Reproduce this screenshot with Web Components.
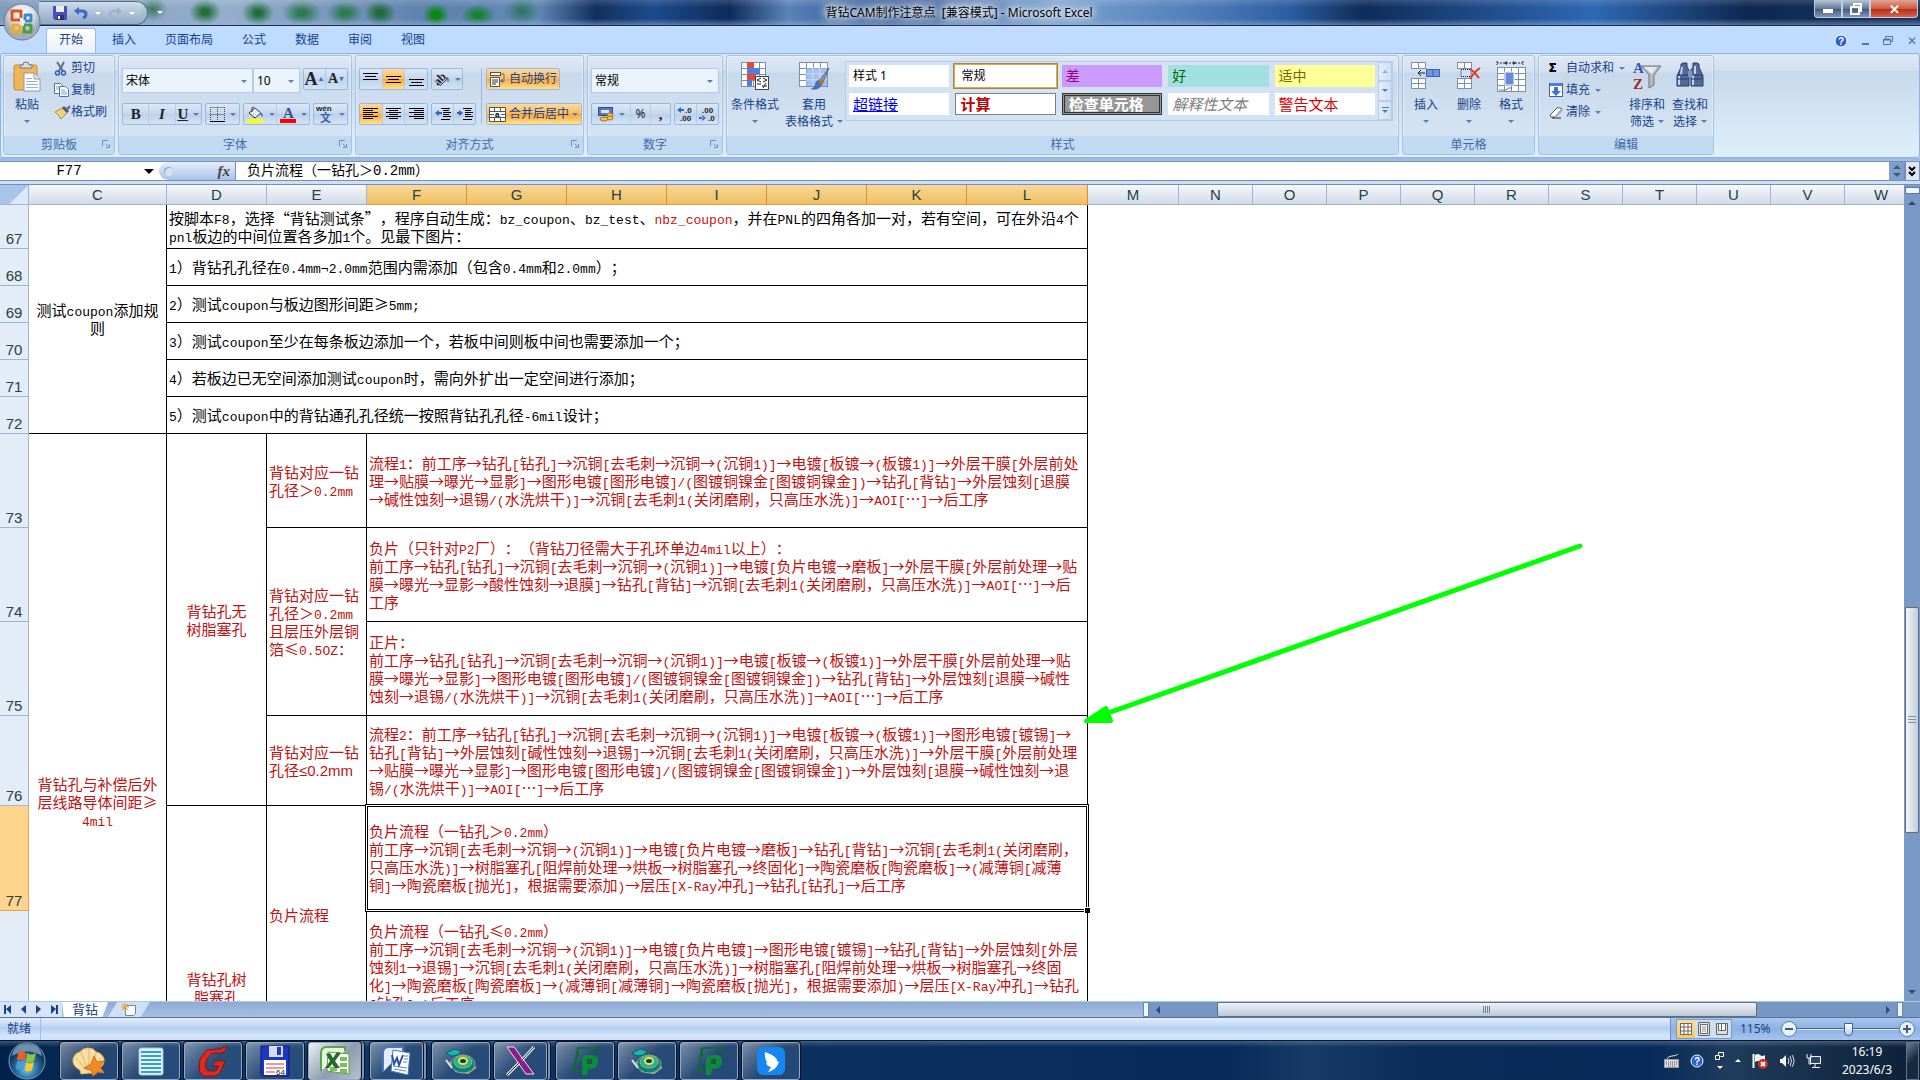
<!DOCTYPE html>
<html lang="zh-CN">
<head>
<meta charset="utf-8">
<title>背钻CAM制作注意点 [兼容模式] - Microsoft Excel</title>
<style>
  html, body { margin: 0; height: 100%; overflow: hidden; }
  body { font: 12px/16px "Noto Sans", "Noto Sans CJK SC", sans-serif; color: #15428b; text-spacing-trim: space-all; }
</style>
</head>
<body>
<excel-app></excel-app>

<script>
/* shared bits used by most of the elements */
const base = `
  * { box-sizing: border-box; }
  button, input, select { font: inherit; color: inherit; margin: 0; padding: 0; border: 0; background: none; border-radius: 0; outline: 0; }
  button { display: flex; align-items: center; justify-content: center; white-space: nowrap; }
  .dn { flex: none; display: inline-block; border: 3px solid transparent; border-top-color: #567db0; border-bottom: 0; }
`;

function define(tag, css, markup, setup) {
  const template = document.createElement("template");
  template.innerHTML = `<style>${base}${css}</style>${markup}`;
  class Component extends HTMLElement {
    constructor() {
      super();
      this.dom = this.attachShadow({ mode: "open" });
      this.dom.appendChild(document.importNode(template.content, true));
    }
    connectedCallback() {
      if (setup) setup.call(this, this.dom);
    }
  }
  window.customElements.define(tag, Component);
}

/* icons: name -> [width, height, svg content] */
const line = (x1, y1, x2, y2, c = "#111", w = 1) =>
  `<path d="M${x1} ${y1}L${x2} ${y2}" stroke="${c}" stroke-width="${w}" fill="none"/>`;
const bars = rows => rows.map(([x, y, w]) => `<rect x="${x}" y="${y}" width="${w}" height="1" fill="#000"/>`).join("");
const sheet = (x, y, c, r, w, h) => {
  let s = "";
  for (let i = 0; i < c; i++) for (let j = 0; j < r; j++)
    s += `<rect x="${x + i * w + 0.5}" y="${y + j * h + 0.5}" width="${w}" height="${h}" fill="#fff" stroke="#7d8fae"/>`;
  return s;
};
const logoP = `<path d="M9 3h17q4 0 4 4M9 3L5 26h6M9 3v8" fill="none" stroke="#0f6a34" stroke-width="2"/><path d="M13 30V15q0-5 5-5h5q6 0 6 6 0 8-8 8h-2l-1 6z" fill="#0e8a3c"/><path d="M18 14h5v5h-5z" fill="#1c5a3c"/>`;
const disc = `<path d="M6 16l6 9 12 2 8-6" fill="none" stroke="#b9b05a" stroke-width="2"/><ellipse cx="19" cy="18" rx="12" ry="9" fill="#0c7f7c" stroke="#7fa8a8"/><ellipse cx="19" cy="16" rx="9" ry="6" fill="#18b4a4" stroke="#c9b13c"/><ellipse cx="19" cy="15" rx="4" ry="3" fill="#053f4a" stroke="#f2e04a" stroke-width="2"/><path d="M2 7l8-4 7 2-3 4-7 1z" fill="#15b8b0" stroke="#0a5f63"/><path d="M2 14l6 8" stroke="#dfe6ea" stroke-width="2"/>`;

const icons = {
  office: [38, 38, `<defs><radialGradient id="o" cx=".5" cy=".3"><stop offset="0" stop-color="#fff"/><stop offset=".6" stop-color="#dfe5ec"/><stop offset="1" stop-color="#a3adba"/></radialGradient></defs>
    <circle cx="19" cy="19" r="18" fill="url(#o)" stroke="#6d7b8f"/><g fill="none" stroke-width="3" stroke-linejoin="round">
    <path d="M17 17h-8v-9h9v7" stroke="#e1501e"/><path d="M22 17v-5h6v6h-6" stroke="#3c86d2"/><path d="M16 22h-6v7h7v-7" stroke="#f3a91b"/><path d="M21 22h7v7h-7v-6" stroke="#4c9e3d"/></g>`],
  save: [14, 14, `<path d="M0 0h14v14H2l-2-2z" fill="#4a4fb0"/><path d="M3 0h8v6H3z" fill="#e9eef8"/><path d="M4 9h7v5H4z" fill="#2b2f7b"/><path d="M5 10h2v3H5z" fill="#fff"/>`],
  undo: [14, 14, `<path d="M4 5h4q4 0 4 3t-3 4" fill="none" stroke="#3868c8" stroke-width="3"/><path d="M0 5l5-4v8z" fill="#3868c8"/>`],
  redo: [14, 14, `<path d="M10 5H6Q2 5 2 8t3 4" fill="none" stroke="#9fb1c8" stroke-width="2"/><path d="M14 5L9 1v8z" fill="#9fb1c8"/>`],
  paste: [28, 31, `<rect x="1" y="4" width="23" height="25" rx="2" fill="#eeb559" stroke="#c58a30"/><path d="M7 7V4h3q0-3 3-3t3 3h3v3z" fill="#d9dde3" stroke="#6d7683"/><path d="M11 12h10l6 6v12H11z" fill="#fff" stroke="#8798b4"/><path d="M21 12v6h6" fill="#dce6f4" stroke="#8798b4"/>${[17, 20, 23, 26].map(y => line(13, y + 0.5, y < 18 ? 19 : 25, y + 0.5, "#9db0d0")).join("")}`],
  cut: [14, 15, `<path d="M3 1l6 9M10 1L5 10" stroke="#5a6f94" stroke-width="2"/><circle cx="3.500" cy="12" r="2" fill="none" stroke="#2f5cb5" stroke-width="1.500"/><circle cx="9.500" cy="12" r="2" fill="none" stroke="#2f5cb5" stroke-width="1.500"/>`],
  copy: [15, 14, `<path d="M.5.5h6l3 3v7h-9z" fill="#fff" stroke="#4d72b5"/><path d="M5.500 3.500h6l3 3v7h-9z" fill="#fff" stroke="#4d72b5"/><path d="M7 7h4M7 9h6M7 11h6M2 4h3M2 6h3" stroke="#7fa1da"/>`],
  brush: [16, 15, `<path d="M1 7l7-4 5 5-6 6q-1-3-6-7z" fill="#f0d27a" stroke="#a68a45"/><path d="M8 3l5 5 2-2-5-5z" fill="#505c70"/><path d="M12 3l4-3v3l-2 2z" fill="#7a5ab0"/>`],
  border: [15, 15, `<path d="M.5.5h14M.5 7.500h14M.5 0v14M7.500 0v14M14.500 0v14" stroke="#444" stroke-dasharray="1 1"/><path d="M0 14.500h15" stroke="#000"/>`],
  fill: [18, 17, `<path d="M3 7l6-5 6 5-6 5z" fill="#e5edf8" stroke="#333"/><path d="M6 6V2q0-1 2-1" fill="none" stroke="#333"/><path d="M14 6q3 1 3 5-3-1-3-5z" fill="#3e72cf"/><rect x="1" y="13" width="16" height="4" fill="#ff0"/>`],
  fontColor: [16, 17, `<text x="3" y="12" font-family="Liberation Serif" font-weight="bold" font-size="15" fill="#30549c">A</text><rect y="13" width="16" height="4" fill="#f00"/>`],
  wen: [18, 19, `<text x="0" y="6" font-family="Liberation Sans" font-weight="bold" font-size="8" fill="#222">wén</text><text x="4" y="17" font-family="Noto Sans CJK SC" font-weight="bold" font-size="11" fill="#3a62b8">文</text>`],
  top: [15, 16, bars([[0, 2, 15], [2, 5, 11], [0, 8, 15]])],
  middle: [15, 16, bars([[0, 5, 15], [2, 8, 11], [0, 11, 15]])],
  bottom: [15, 16, bars([[0, 8, 15], [2, 11, 11], [0, 14, 15]])],
  left: [15, 16, bars([[0, 2, 15], [0, 4, 10], [0, 6, 15], [0, 8, 10], [0, 10, 15], [0, 12, 10]])],
  center: [15, 16, bars([[0, 2, 15], [3, 4, 9], [0, 6, 15], [3, 8, 9], [0, 10, 15], [3, 12, 9]])],
  right: [15, 16, bars([[0, 2, 15], [5, 4, 10], [0, 6, 15], [5, 8, 10], [0, 10, 15], [5, 12, 10]])],
  outdent: [16, 16, bars([[6, 2, 9], [8, 4, 6], [8, 6, 8], [8, 8, 6], [8, 10, 8], [6, 13, 9]]) + `<path d="M0 7l4-3v6z" fill="#2f62c4"/><path d="M3 7h4" stroke="#2f62c4" stroke-width="2"/>`],
  indent: [16, 16, bars([[6, 2, 9], [8, 4, 6], [8, 6, 8], [8, 8, 6], [8, 10, 8], [6, 13, 9]]) + `<path d="M6 7L2 4v6z" fill="#2f62c4"/><path d="M0 7h4" stroke="#2f62c4" stroke-width="2"/>`],
  orient: [17, 17, `<text x="1" y="12" transform="rotate(-45 7 9)" font-family="Liberation Serif" font-weight="bold" font-size="12" fill="#222">ab</text><path d="M7 15l8-8m0 4V7h-4" fill="none" stroke="#444"/>`],
  wrap: [17, 17, `<rect x="1.500" y="1.500" width="10" height="3" fill="#fff" stroke="#555"/><path d="M1.500 6.500h9v9h-9z" fill="#fff" stroke="#555"/><path d="M3 9h6M3 11h6M3 13h4" stroke="#333"/><path d="M12 3h3v7h-2" fill="none" stroke="#3e72cf"/><path d="M11 10l3-2v4z" fill="#3e72cf"/>`],
  merge: [17, 15, `<path d="M.5.5h16v14H.5zM.5 4.500h16M.5 10.500h16M5.500.5v4M11.500.5v4M5.500 10.500v4M11.500 10.500v4" fill="#fff" stroke="#555"/><text x="6" y="10" font-family="Liberation Sans" font-weight="bold" font-size="8" fill="#000">a</text><path d="M1 7.500h4M12 7.500h4" stroke="#2f62c4"/>`],
  money: [16, 17, `<rect x=".5" y="1.500" width="14" height="8" fill="#5579c4" stroke="#2c4a8c"/><rect x="3" y="4" width="8" height="3" fill="#dfe8f8"/><ellipse cx="12" cy="9" rx="3" ry="2" fill="#f6c34b" stroke="#a3721c"/><ellipse cx="12" cy="12" rx="3" ry="2" fill="#f6c34b" stroke="#a3721c"/><ellipse cx="6" cy="13" rx="4" ry="2" fill="#f6c34b" stroke="#a3721c"/>`],
  decInc: [17, 16, `<path d="M0 4l4-3v6zM3 3h4v2H3z" fill="#3068cf"/><text font-family="Liberation Sans" font-weight="bold" font-size="8" fill="#222"><tspan x="8" y="7">.0</tspan><tspan x="3" y="15">.00</tspan></text>`],
  decDec: [17, 16, `<path d="M7 12L3 9v6zM0 11h4v2H0z" fill="#3068cf"/><text font-family="Liberation Sans" font-weight="bold" font-size="8" fill="#222"><tspan x="3" y="7">.00</tspan><tspan x="9" y="15">.0</tspan></text>`],
  cond: [32, 30, `${sheet(2, 1, 4, 4, 6, 6)}<rect x="8" y="1" width="7" height="6" fill="#e04a3a"/><rect x="8" y="7" width="13" height="6" fill="#4f7fd8"/><rect x="8" y="13" width="9" height="6" fill="#e04a3a"/><rect x="8" y="19" width="5" height="6" fill="#4f7fd8"/><rect x="16.500" y="15.500" width="13" height="13" fill="#fff" stroke="#444"/><path d="M22 17l-4 2 4 2M18 23h4M24 17l4 2-4 2M23 25h5M27 22l-3 5" fill="none" stroke="#222"/>`],
  tableFmt: [32, 30, `${sheet(1, 1, 4, 4, 7, 6)}<path d="M8 7h21v18H8z" fill="#8bb2ee" opacity=".8"/><path d="M15 7v18M22 7v18M8 13h21M8 19h21" stroke="#d8e6fa"/><path d="M31 7l-9 12 3 2z" fill="#8e99a8" stroke="#5d6774"/><path d="M22 18q-5 2-5 6-1 3-5 4 9 3 13-6z" fill="#3f71c0"/><path d="M22 18l4 3-2 3-4-3z" fill="#b6752c"/>`],
  insert: [32, 30, `${sheet(1, 1, 2, 1, 7, 6)}${sheet(1, 17, 2, 2, 7, 5)}<rect x="16.500" y="8.500" width="13" height="7" fill="#6d97e6" stroke="#3c62ad"/><path d="M23 9v6" stroke="#3c62ad"/><path d="M15 12H8m3-3l-3 3 3 3" fill="none" stroke="#222"/>`],
  remove: [28, 30, `${sheet(2, 1, 2, 1, 7, 6)}${sheet(2, 17, 2, 2, 7, 5)}<path d="M6 8.500h10v7H6z" fill="#cfe0fa" stroke="#222" stroke-dasharray="1 1"/><path d="M15 8q5 3 9 9M25 7q-6 4-10 11" fill="none" stroke="#e03a22" stroke-width="2"/>`],
  format: [32, 31, `<path d="M2 2h26M2 0v4M28 0v4" stroke="#333" stroke-dasharray="2 1"/><path d="M9 2l3-2v4zM21 2l-3-2v4z" fill="#333"/>${sheet(2, 6, 4, 4, 7, 6)}<rect x="10" y="11" width="9" height="13" fill="#5e8be0" stroke="#fff"/><path d="M4 29h7l2-2h4" stroke="#777" fill="none"/>`],
  fillDown: [14, 16, `<rect x=".5" y="1.500" width="13" height="13" fill="#fff" stroke="#3c62ad"/><rect x="1" y="1" width="12" height="3" fill="#4f7fd8"/><path d="M5 5h4v4h3l-5 5-5-5h3z" fill="#3e72e0"/>`],
  eraser: [14, 13, `<path d="M1 9l7-7q3-1 5 1L6 11H2z" fill="#fff" stroke="#555"/><path d="M3 12h9" stroke="#222"/><path d="M6 11l7-8v3l-6 6z" fill="#aab4c2"/>`],
  sort: [30, 30, `<text x="1" y="12" font-family="Liberation Serif" font-weight="bold" font-size="15" fill="#3458a8">A</text><text x="1" y="28" font-family="Liberation Serif" font-weight="bold" font-size="15" fill="#9c2a22">Z</text><path d="M9 5h20l-7 9v10l-5 3V14z" fill="#b5bac1" stroke="#6f757d"/><path d="M12 6h13l-5 7z" fill="#e6e9ed"/>`],
  find: [30, 28, `<path d="M8 2h4v4l2 3v16H2V15l4-9V3zM22 2h-4v4l-2 3v16h12V15l-4-9V3z" fill="#516a9e" stroke="#2b3d66"/><path d="M4 15v9M7 6l-1 8M18 14v10M20 5v8" stroke="#c5d3ee" stroke-width="2"/><path d="M2 18h12M16 18h12M2 14h12M16 14h12" stroke="#28375d"/><rect x="13" y="10" width="4" height="6" fill="#7f93bb"/>`],
  launch: [8, 8, `<path d="M.5 6V.5H6M3.500 3.500l3 3M7.500 4v3.500H4" fill="none" stroke="#6a8ebf"/>`],
  help: [14, 14, `<circle cx="7" cy="7" r="6" fill="#2a62d0" stroke="#fff"/><text x="4" y="11" font-family="Liberation Sans" font-weight="bold" font-size="10" fill="#fff">?</text>`],
  restore: [10, 9, `<path d="M2.500 2.500v-2h7v5h-2M.5 3.500h7v5h-7z" fill="none" stroke="#5a6f91"/><path d="M1 3.500h6" stroke="#5a6f91" stroke-width="2"/>`],
  winRestore: [12, 12, `<path d="M4 3V1h7v7H9M1 4h8v7H1z" fill="none" stroke="#fff" stroke-width="2"/>`],
  newSheet: [17, 13, `<path d="M4.500 2.500h10v8l-2 2h-8z" fill="#fff" stroke="#6f86ab"/><path d="M4 0v8M0 4h8M1 1l6 6M7 1L1 7" stroke="#e69a2c"/>`],
  normalView: [14, 14, `<path d="M1.500 1.500h11v11h-11zM5 1v12M9 1v12M1 5h12M1 9h12" fill="#fff" stroke="#6b655a"/>`],
  pageView: [14, 14, `<path d="M1.500.5h11v13h-11z" fill="#ddd" stroke="#666"/><path d="M3.500 2.500h7v9h-7z" fill="#fff" stroke="#666"/><path d="M5 5h4M5 7h4M5 9h4" stroke="#888"/>`],
  breakView: [14, 14, `<path d="M1.500 1.500h11v11h-11z" fill="#ddd" stroke="#666"/><path d="M3.500 1.500h3v7h-3zM6.500 1.500h4v7h-4z" fill="#fff" stroke="#666"/>`],
  start: [38, 38, `<defs><radialGradient id="s" cx=".5" cy=".7"><stop offset="0" stop-color="#7fd0ee"/><stop offset=".6" stop-color="#2a6d9e"/><stop offset="1" stop-color="#123a5e"/></radialGradient></defs><circle cx="19" cy="19" r="18" fill="url(#s)" stroke="#6fa4c4"/><path d="M4 14q15-9 30 0-2-12-15-12T4 14z" fill="#cfe4f0" opacity=".5"/>
    <path d="M10 11q4-3 8 0l-1 8q-4-3-8 0z" fill="#e8602a"/><path d="M19 11q4 3 9 0l-2 8q-4 3-8 0z" fill="#8cc63f"/><path d="M9 20q4-3 8 0l-1 8q-4-3-8 0z" fill="#3f9fe0"/><path d="M18 20q4 3 8 0l-2 8q-4 3-7 0z" fill="#ffc72e"/>`],
  shell: [34, 30, `<path d="M17 27l-8 1-1-4Q0 20 1 13 3 7 8 6q3-4 8-4 6 0 8 4 6 1 8 7 1 7-7 11l-1 4z" fill="#f9e0a2" stroke="#e2b25c"/><path d="M15 25L4 12M16 25L9 6M17 25V3M18 25l6-18M19 25l10-13" stroke="#e3b564"/><path d="M22 10l3 6 7-1-4 6 4 6-7-1-4 4-2-6-7-2 7-4z" fill="#f08a24" stroke="#d0731a" stroke-linejoin="round"/>`],
  notepad: [26, 30, `<rect x="1" y="2" width="24" height="27" rx="2" fill="#dff3fb" stroke="#9fc5da"/>${[5, 9, 13, 17, 21, 25].map(y => `<rect x="3" y="${y}" width="20" height="2" fill="#3d9cc8"/>`).join("")}`],
  g: [30, 32, `<path d="M29 1q-1 6-6 7H14l-5 6-2 8 3 4h8l3-5h-6l2-5h10l-4 10-5 5H6l-5-5 1-12 7-9 13-1z" fill="#dc2c20" stroke="#8e120c"/>`],
  floppy: [30, 32, `<path d="M1 1h28v30H3l-2-2z" fill="#1d36c4" stroke="#0b1a78"/><rect x="9" y="1" width="14" height="11" fill="#d7dce6"/><rect x="17" y="2" width="4" height="8" fill="#1d36c4"/><rect x="4" y="15" width="22" height="15" fill="#fff"/><path d="M6 19h18M6 23h18M6 27h9" stroke="#d33"/><text x="16" y="30" font-family="Liberation Sans" font-size="8" fill="#222">64</text>`],
  excel: [32, 32, `<path d="M2 26V8q0-6 6-6h18v4" fill="#e6f4e0" stroke="#5aa545" stroke-width="2"/><path d="M9 7l21 2v20L8 26z" fill="#fff" stroke="#5aa545"/><path d="M21 12h7v4h-7zM21 18h7v4h-7zM21 24h7v4h-7zM11 22h7v4h-7z" fill="#7cbf5c"/><path d="M7 9l4-1 3 5 4-6 4 1-6 8 5 7h-5l-3-4-3 4H6l5-7z" fill="#276b2a"/>`],
  word: [32, 32, `<path d="M2 27V8q0-6 6-6h14v4" fill="#e3ecfa" stroke="#4a76c0" stroke-width="2"/><path d="M12 5l17 3-2 22-17-4z" fill="#fff" stroke="#4a76c0"/><path d="M23 11h4M23 14h4M22 17h4M13 21l13 2M13 24l12 2" stroke="#5b85cb"/><path d="M11 10l2 9 3-6 2 7 4-10" fill="none" stroke="#2854a4" stroke-width="2"/>`],
  disc: [34, 30, disc],
  x: [32, 30, `<path d="M2 1h7l20 27h-8z" fill="#8b1a8b" stroke="#f0e0f0"/><path d="M29 1L17 14M14 17L2 29" stroke="#f4f4f4" stroke-width="3"/><path d="M29 1L17 14M14 17L2 29" stroke="#222"/>`],
  p: [32, 32, logoP],
  wing: [30, 30, `<rect x="1" y="1" width="28" height="28" rx="6" fill="#1687f0"/><path d="M9 6q12 4 12 9l2 1q-3 8-11 10 2-3 3-5-5-1-5-5l2 1q-4-4-3-11z" fill="#fff"/>`],
  keyboard: [15, 14, `<path d="M3 5q1-3 5-3t6-2" fill="none" stroke="#ddd"/><rect x=".5" y="5.500" width="14" height="8" fill="#ddd" stroke="#999"/><path d="M2 8h11M2 10h11M4 12h7" stroke="#555" stroke-dasharray="1 1"/>`],
  mini: [9, 8, `<path d="M3.500 3v-2.500h5v4h-3M.5 3.500h4v4h-4z" fill="none" stroke="#fff"/>`],
  flag: [16, 16, `<path d="M1.500 1v14" stroke="#fff" stroke-width="2"/><path d="M3 2q3-2 5 0t5 0v7q-3 2-5 0t-5 0z" fill="#f4f4f4"/><circle cx="11" cy="11" r="5" fill="#d8281c"/><path d="M9 9l4 4M13 9l-4 4" stroke="#fff" stroke-width="2"/>`],
  sound: [16, 14, `<path d="M1 5h2l4-4v12L3 9H1z" fill="#f4f4f4"/><path d="M9 4q2 3 0 6M11 2q3 5 0 10M13 1q4 6 0 12" fill="none" stroke="#ddd"/>`],
  net: [16, 15, `<path d="M4.500 3.500h10v7h-10zM9 11v3M6 14.500h8" fill="#26476b" stroke="#f4f4f4"/><path d="M1 1v4h4V1M3 5v6h2" fill="none" stroke="#f4f4f4" stroke-width="1"/>`]
};

class AppIcon extends HTMLElement {
  connectedCallback() {
    if (this.shadowRoot || !this.hasAttribute("name")) return;
    const [w, h, body] = icons[this.getAttribute("name")];
    this.attachShadow({ mode: "open" }).innerHTML =
      `<style>:host { display: block; flex: none; } svg { display: block; }</style>
       <svg width="${w}" height="${h}" viewBox="0 0 ${w} ${h}" aria-hidden="true">${body}</svg>`;
  }
}
window.customElements.define("app-icon", AppIcon);

/* title bar */
define("title-bar", `
  :host { display: flex; height: 26px; align-items: flex-start; position: relative; z-index: 2; color: #000; border-bottom: 1px solid #1c2c44;
    background:
      linear-gradient(rgba(255,255,255,.15), transparent 30%, transparent 75%, rgba(150,180,220,.5)),
      radial-gradient(ellipse 14px 12px at 153px 9px, rgba(40,110,60,.8), transparent),
      radial-gradient(ellipse 16px 13px at 205px 12px, rgba(20,105,45,.9) 20%, transparent),
      radial-gradient(ellipse 16px 13px at 258px 13px, rgba(20,105,45,.9) 20%, transparent),
      radial-gradient(ellipse 20px 13px at 302px 13px, rgba(25,115,55,.8) 20%, transparent),
      radial-gradient(ellipse 18px 12px at 345px 13px, rgba(25,115,55,.8) 20%, transparent),
      radial-gradient(ellipse 16px 13px at 380px 13px, rgba(20,105,45,.9) 20%, transparent),
      radial-gradient(ellipse 13px 12px at 436px 15px, rgba(10,135,25,1) 30%, transparent),
      radial-gradient(ellipse 17px 11px at 478px 15px, rgba(15,130,35,.9) 20%, transparent),
      radial-gradient(ellipse 18px 14px at 522px 11px, rgba(30,110,70,.8), transparent),
      linear-gradient(90deg, #7e99ba 0, #94aecb 12%, #5f82ae 22%, #6289b6 28%, #12305f 31%, #1e4a8c 34%, #0e2b5a 38%, #5a83b8 41%, #2a5290 46%, #7ba2d2 55%, #4d7ab6 63%, #2d5fa4 67%, #0f2c5a 71%, #2f68b4 83%, #0e2850 91%, #16345f 100%);
  }
  .side { flex: 1; display: flex; align-items: center; }
  .orb { position: absolute; left: 3px; top: 3px; }
  .qat { display: flex; align-items: center; gap: 7px; height: 24px; margin: 1px 0 0 39px; padding: 0 12px 0 13px; border: 1px solid #56708f; border-left-color: transparent; border-radius: 0 12px 12px 0; background: linear-gradient(rgba(235,242,250,.7), rgba(150,172,200,.6)); }
  .qat .dn, .more { border-top-color: #fff; }
  .more { margin-left: 9px; }
  h1 { margin: 4px 0 0; font: inherit; line-height: 18px; white-space: pre; text-shadow: 0 0 5px #fff, 0 0 8px #fff, 0 0 12px #fff, 0 0 16px #fff; }
  .win { justify-content: flex-end; padding-right: 2px; }
  .win button { height: 18px; width: 28px; border: 1px solid #c3cfdf; border-top: 0; background: linear-gradient(#b9c6d6, #61779a 50%, #3f5678 51%, #7d97b8); color: #fff; }
  .win button:first-child { border-radius: 0 0 0 4px; }
  .win i { width: 10px; height: 4px; background: #fff; margin-top: 4px; }
  .win button.close { width: 48px; border-radius: 0 0 4px 0; background: linear-gradient(#e3a493, #cc5a42 50%, #b32c12 51%, #d8604a); font-weight: bold; font-size: 13px; }
`, `
  <div class="side">
    <button class="orb" aria-label="Office"><app-icon name="office"></app-icon></button>
    <div class="qat">
      <button aria-label="保存"><app-icon name="save"></app-icon></button>
      <button aria-label="撤消"><app-icon name="undo"></app-icon></button><i class="dn"></i>
      <button aria-label="恢复"><app-icon name="redo"></app-icon></button><i class="dn"></i>
    </div><i class="dn more"></i>
  </div>
  <h1>背钻CAM制作注意点  [兼容模式] - Microsoft Excel</h1>
  <div class="side win">
    <button aria-label="最小化"><i></i></button><button aria-label="还原"><app-icon name="winRestore"></app-icon></button><button class="close" aria-label="关闭">✕</button>
  </div>
`);

define("ribbon-tabs", `
  :host { display: flex; height: 27px; padding: 2px 3px 0 46px; background: #bfdbff; justify-content: space-between; }
  nav { display: flex; gap: 1px; }
  nav button { padding: 0 14px 2px; }
  nav .on { padding: 0 12px 2px; margin-right: 1px; background: linear-gradient(#fff, #e9f1fb); border: 1px solid #9cbbe0; border-bottom: 0; border-radius: 3px 3px 0 0; }
  .doc { display: flex; align-items: center; gap: 14px; color: #5a6f91; }
  .doc i { width: 7px; height: 2px; background: #5a6f91; margin-top: 6px; }
`, `
  <nav>
    <button class="on">开始</button><button>插入</button><button>页面布局</button><button>公式</button><button>数据</button><button>审阅</button><button>视图</button>
  </nav>
  <div class="doc">
    <button aria-label="帮助"><app-icon name="help"></app-icon></button>
    <button aria-label="最小化"><i></i></button>
    <button aria-label="还原"><app-icon name="restore"></app-icon></button>
    <button aria-label="关闭">✕</button>
  </div>
`);

define("ribbon-group", `
  :host { display: flex; flex-direction: column; border: 1px solid #a6c1e2; border-radius: 3px; box-shadow: inset 0 0 0 1px rgba(255,255,255,.4); overflow: hidden;
    background: linear-gradient(#dde8f5, #d3e0f0 16px, #c8d8ec 17px, #d5e4f2 80px); }
  .body { height: 80px; display: flex; }
  footer { flex: 1; display: flex; align-items: center; justify-content: center; background: #c1d9f1; color: #3e6aaa; position: relative; }
  button { position: absolute; right: 4px; top: 4px; }
  :host([plain]) button { display: none; }
`, `<div class="body"><slot></slot></div><footer><span></span><button aria-label="更多选项"><app-icon name="launch"></app-icon></button></footer>`,
function (dom) { dom.querySelector("span").textContent = this.getAttribute("label"); });

/* large button: icon, text, arrow under it or beside the second line */
define("big-button", `
  :host { display: block; }
  button { width: 100%; flex-direction: column; justify-content: flex-start; padding-top: 5px; line-height: 17px; }
  .pic { height: 35px; display: block; }
  .row { display: flex; align-items: center; gap: 4px; height: 17px; }
`, `<button><span class="pic"></span><slot></slot><span class="row"><span></span><i class="dn"></i></span></button>`,
function (dom) {
  const icon = document.createElement("app-icon");
  icon.setAttribute("name", this.getAttribute("icon"));
  dom.querySelector(".pic").appendChild(icon);
  if (this.getAttribute("second")) dom.querySelector(".row span").textContent = this.getAttribute("second");
  else dom.querySelector(".row span").remove();
});

define("small-button", `
  :host { display: block; }
  button { height: 22px; }
  .pic { width: 17px; display: flex; justify-content: flex-start; color: #000; font-weight: bold; }
  .dn { margin-left: 5px; display: none; }
  :host([drop]) .dn { display: block; }
`, `<button><span class="pic"><slot name="icon"></slot></span><slot></slot><i class="dn"></i></button>`);

/* bordered strip of tool buttons */
define("tool-set", `
  :host { display: flex; height: 22px; border: 1px solid #9ab9e0; border-radius: 2px; background: linear-gradient(#dbe7f5, #c5d7ee 50%, #bcd0ea 51%, #d4e3f4); color: #222; }
`, `<slot></slot>`);

define("style-gallery", `
  :host { display: flex; border: 1px solid #b3cdea; background: #d4e3f4; height: 60px; margin-top: 5px; }
  .items { flex: 1; display: grid; grid-template-columns: repeat(5, 1fr); grid-template-rows: 28px 28px; }
  .items button { margin: 3px; padding: 0 4px; justify-content: flex-start; background: #fff; color: #000; line-height: 18px; }
  .items button.sel { margin: 1px; padding: 0 6px; border: 2px solid #e5a93a; outline: 1px solid #a3874a; outline-offset: -1px; }
  .items .bad { background: #c9f; color: #9c0070; }
  .items .good { background: #a0e0e0; color: #006b00; }
  .items .mid { background: #ff9; color: #7a6500; }
  .items .bad, .items .good, .items .mid, .items .link, .items .calc, .items .check, .items .note, .items .warn { font-size: 14px; }
  .items .link { color: #00f; text-decoration: underline; font-size: 15px; }
  .items .calc { color: #c00000; font-weight: bold; border: 1px solid #7f7f7f; font-size: 15px; }
  .items .check { color: #fff; background: #969696; font-weight: bold; border: 3px double #333; font-size: 15px; }
  .items .note { color: #808080; font-style: italic; font-size: 15px; }
  .items .warn { color: #e00000; font-size: 15px; }
  .scroll { width: 14px; display: flex; flex-direction: column; }
  .scroll button { flex: 1; border: 1px solid #b3cdea; background: linear-gradient(90deg, #e3edf9, #cfdff2); flex-direction: column; gap: 2px; }
  .up { transform: rotate(180deg); opacity: .5; }
  b { width: 7px; height: 1px; background: #567db0; }
`, `
  <div class="items">
    <button>样式 1</button><button class="sel">常规</button><button class="bad">差</button><button class="good">好</button><button class="mid">适中</button>
    <button class="link">超链接</button><button class="calc">计算</button><button class="check">检查单元格</button><button class="note">解释性文本</button><button class="warn">警告文本</button>
  </div>
  <div class="scroll">
    <button aria-label="上一行"><i class="dn up"></i></button><button aria-label="下一行"><i class="dn"></i></button><button aria-label="其他"><b></b><i class="dn"></i></button>
  </div>
`);

define("ribbon-bar", `
  :host { display: flex; gap: 3px; height: 105px; padding: 1px 2px 2px; border: 1px solid #8db2e3; border-radius: 3px; background: linear-gradient(#dde8f5, #d3e0f0 16px, #c8d8ec 17px, #ddf0fa); }
  .col { display: flex; flex-direction: column; }
  .rows { display: flex; flex-direction: column; gap: 11px; padding: 12px 4px 0 3px; }
  .row { display: flex; gap: 3px; align-items: flex-start; height: 24px; }
  .row + .row { height: 22px; }
  .combo { position: relative; display: flex; height: 25px; border: 1px solid #b3c9e6; background: #eaf2fb; color: #000; }
  .combo select { appearance: none; width: 100%; padding-left: 3px; }
  .combo .dn { position: absolute; right: 5px; top: 11px; }
  .combo + .combo { margin-left: -3px; }
  .sep { width: 1px; align-self: stretch; background: #9ab9e0; margin: 12px 1px; }
  tool-set button { flex: 1; gap: 5px; font-size: 12px; }
  tool-set button + button { border-left: 1px solid #b5cce8; }
  tool-set .wide { flex: 2; }
  tool-set .on { background: linear-gradient(#fbd9a0, #fdbb5c 50%, #fca63c 51%, #fee18c); color: #15428b; }
  tool-set .serif { font-family: "Liberation Serif", serif; font-weight: bold; font-size: 15px; }
  tool-set .grow { font-size: 18px; gap: 0; }
  tool-set .shrink { font-size: 14px; gap: 0; }
  sup { font-size: 7px; line-height: 14px; color: #3868c8; }
  tool-set .full { justify-content: flex-start; padding-left: 2px; gap: 3px; }
  ribbon-group { flex: none; }
`, `
  <ribbon-group label="剪贴板" style="width:112px">
    <big-button icon="paste" style="width:46px">粘贴</big-button>
    <div class="col" style="padding:1px 0 0 4px">
      <small-button><app-icon slot="icon" name="cut"></app-icon>剪切</small-button>
      <small-button><app-icon slot="icon" name="copy"></app-icon>复制</small-button>
      <small-button><app-icon slot="icon" name="brush"></app-icon>格式刷</small-button>
    </div>
  </ribbon-group>

  <ribbon-group label="字体" style="width:234px">
    <div class="rows">
      <div class="row">
        <label class="combo" style="width:131px"><select aria-label="字体"><option>宋体</option></select><i class="dn"></i></label>
        <label class="combo" style="width:47px"><select aria-label="字号"><option>10</option></select><i class="dn"></i></label>
        <tool-set style="width:45px"><button class="serif grow">A<sup>▲</sup></button><button class="serif shrink">A<sup>▼</sup></button></tool-set>
      </div>
      <div class="row">
        <tool-set style="width:80px"><button class="serif">B</button><button class="serif"><i>I</i></button><button class="serif"><u>U</u><i class="dn"></i></button></tool-set>
        <tool-set style="width:35px"><button><app-icon name="border"></app-icon><i class="dn"></i></button></tool-set>
        <tool-set style="width:67px"><button><app-icon name="fill"></app-icon><i class="dn"></i></button><button><app-icon name="fontColor"></app-icon><i class="dn"></i></button></tool-set>
        <tool-set style="width:35px"><button><app-icon name="wen"></app-icon><i class="dn"></i></button></tool-set>
      </div>
    </div>
  </ribbon-group>

  <ribbon-group label="对齐方式" style="width:229px">
    <div class="rows">
      <div class="row">
        <tool-set style="width:69px"><button><app-icon name="top"></app-icon></button><button class="on"><app-icon name="middle"></app-icon></button><button><app-icon name="bottom"></app-icon></button></tool-set>
        <tool-set style="width:32px"><button><app-icon name="orient"></app-icon><i class="dn"></i></button></tool-set>
      </div>
      <div class="row">
        <tool-set style="width:69px"><button class="on"><app-icon name="left"></app-icon></button><button><app-icon name="center"></app-icon></button><button><app-icon name="right"></app-icon></button></tool-set>
        <tool-set style="width:45px"><button><app-icon name="outdent"></app-icon></button><button><app-icon name="indent"></app-icon></button></tool-set>
      </div>
    </div>
    <i class="sep"></i>
    <div class="rows" style="padding-right:0">
      <div class="row"><tool-set style="width:74px"><button class="on full"><app-icon name="wrap"></app-icon>自动换行</button></tool-set></div>
      <div class="row"><tool-set style="width:96px"><button class="on full"><app-icon name="merge"></app-icon>合并后居中<i class="dn"></i></button></tool-set></div>
    </div>
  </ribbon-group>

  <ribbon-group label="数字" style="width:136px">
    <div class="rows">
      <div class="row"><label class="combo" style="width:128px"><select aria-label="数字格式"><option>常规</option></select><i class="dn"></i></label></div>
      <div class="row">
        <tool-set style="width:80px"><button class="wide"><app-icon name="money"></app-icon><i class="dn"></i></button><button>%</button><button class="serif">,</button></tool-set>
        <tool-set style="width:45px"><button><app-icon name="decInc"></app-icon></button><button><app-icon name="decDec"></app-icon></button></tool-set>
      </div>
    </div>
  </ribbon-group>

  <ribbon-group plain label="样式" style="width:673px">
    <big-button icon="cond" style="width:56px">条件格式</big-button>
    <big-button icon="tableFmt" second="表格格式" style="width:62px">套用</big-button>
    <style-gallery style="width:548px"></style-gallery>
  </ribbon-group>

  <ribbon-group plain label="单元格" style="width:133px">
    <big-button icon="insert" style="width:46px">插入</big-button>
    <big-button icon="remove" style="width:40px">删除</big-button>
    <big-button icon="format" style="width:44px">格式</big-button>
  </ribbon-group>

  <ribbon-group plain label="编辑" style="width:176px">
    <div class="col" style="padding:1px 0 0 10px;width:86px">
      <small-button drop><b slot="icon">Σ</b>自动求和</small-button>
      <small-button drop><app-icon slot="icon" name="fillDown"></app-icon>填充</small-button>
      <small-button drop><app-icon slot="icon" name="eraser"></app-icon>清除</small-button>
    </div>
    <big-button icon="sort" second="筛选" style="width:44px">排序和</big-button>
    <big-button icon="find" second="选择" style="width:42px">查找和</big-button>
  </ribbon-group>
`);

define("formula-bar", `
  :host { display: flex; height: 26px; padding: 3px 0 3px; background: linear-gradient(#9bb9e0, #cfe0f6 80%); color: #000; }
  .box { flex: 1; display: flex; height: 20px; background: #fff; border: 1px solid #7290b8; border-left: 0; }
  input { font-family: "Liberation Mono", "Noto Sans CJK SC", monospace; font-size: 14px; min-width: 0; }
  .name { width: 138px; text-align: center; }
  .list { width: 21px; }
  .list .dn { border-width: 5px; border-bottom: 0; border-top-color: #000; }
  .fx { width: 77px; display: flex; align-items: center; justify-content: space-between; padding: 0 5px; border-radius: 9px 0 0 9px; border-right: 1px solid #7290b8; background: linear-gradient(#e6eefa, #a9c3e6); }
  .fx i { width: 9px; height: 9px; border-radius: 50%; background: #d5e2f3; box-shadow: inset 1px 1px #8ba8cf; }
  .fx em { font: italic bold 15px/16px "Liberation Serif", serif; color: #444; }
  .text { flex: 1; padding-left: 11px; }
  .spin { width: 15px; background: #7f9fca; flex-direction: column; gap: 4px; }
  .spin .dn { border-width: 4px; border-bottom: 0; border-top-color: #3b5a8c; }
  .spin .dn:first-child { transform: rotate(180deg); }
  .grow { width: 15px; background: #dbe7f6; border: 1px solid #7290b8; }
`, `
  <div class="box">
    <input class="name" value="F77" aria-label="名称框"><button class="list" aria-label="名称列表"><i class="dn"></i></button>
    <div class="fx"><i></i><em>fx</em></div>
    <input class="text" value="负片流程（一钻孔＞0.2mm）" aria-label="编辑栏">
    <button class="spin" aria-label="滚动"><i class="dn"></i><i class="dn"></i></button>
  </div>
  <button class="grow" aria-label="展开编辑栏"><svg width="9" height="11"><path d="M1 1l3 3 3-3M1 6l3 3 3-3" fill="none" stroke="#000" stroke-width="2"/></svg></button>
`);

/* worksheet */
define("work-sheet", `
  :host { flex: 1; min-height: 0; display: flex; background: #fff; border-top: 1px solid #7290b8; }
  .view { flex: 1; min-width: 0; overflow: hidden; position: relative; }
  table { table-layout: fixed; width: calc(100% + 14px); border-collapse: separate; border-spacing: 0; font: 15px/18px "Noto Sans CJK SC", sans-serif; color: #000; }
  th { font: 15px/18px "Liberation Sans", sans-serif; color: #27413e; padding: 0; }
  thead th { height: 20px; border: solid #9eb6ce; border-width: 0 1px 1px 0; background: linear-gradient(#f6f9fd, #dfe6ef 60%, #d3dbe7); }
  thead th.on { background: linear-gradient(#f8d79b, #f1c05f); border-color: #e28b27; border-bottom-color: #d3a057; }
  thead th.all { background: linear-gradient(135deg, #a9c4e9 60%, #dbe8f8 61%); }
  tbody th { background: #e4ecf7; border: solid #9eb6ce; border-width: 0 1px 1px 0; vertical-align: bottom; }
  tbody th.on { background: #ffd58d; border-color: #e9a14f; }
  td { padding: 0 2px; border: solid #000; border-width: 0 1px 1px 0; vertical-align: middle; white-space: nowrap; }
  td.c { text-align: center; }
  .red { color: #c01212; }
  td.sel { position: relative; }
  td.sel::after { content: ""; position: absolute; inset: -1px; border: 1px solid #fff; outline: 1px solid #000; box-shadow: inset 0 0 0 1px #000; }
  td.sel::before { content: ""; position: absolute; right: -3px; bottom: -3px; width: 5px; height: 5px; background: #000; border: solid #fff; border-width: 1px 0 0 1px; z-index: 1; }
  .half { font-family: "Liberation Mono", monospace; font-size: 13px; line-height: 0; }
  .arial { font-family: "Liberation Sans", sans-serif; line-height: 0; }
  .mark { position: absolute; left: 1080px; top: 355px; }
  .bar { width: 16px; background: #7b99c6; display: flex; flex-direction: column; align-items: center; }
  .split { width: 15px; height: 7px; margin-top: 2px; border: 1px solid #5d7aa8; background: #f2f6fb; }
  .bar button { width: 16px; height: 18px; }
  .bar .dn { border-width: 4px; border-bottom: 0; border-top-color: #2e4a7c; }
  .up { transform: rotate(180deg); }
  .track { flex: 1; width: 100%; display: flex; flex-direction: column; padding: 0 1px; }
  .track::before { content: ""; flex: 397; }
  .track::after { content: ""; flex: 151; }
  .thumb { flex: 225; border: 1px solid #5d7087; border-radius: 2px; background: linear-gradient(90deg, #f4f6f9, #c3ccd8); display: flex; align-items: center; justify-content: center; }
  .thumb::after { content: ""; width: 8px; height: 8px; background: repeating-linear-gradient(#7d8fa8 0 1px, transparent 1px 3px); }
`, `
  <div class="view">
    <table>
      <colgroup>
        <col style="width:29px"><col style="width:138px"><col style="width:100px" span="8"><col style="width:121px"><col style="width:91px"><col style="width:74px" span="9"><col>
      </colgroup>
      <thead><tr><th class="all"></th></tr></thead>
      <tbody>
        <tr style="height:44px"><th>67</th>
          <td class="c" rowspan="6">测试coupon添加规<br>则</td>
          <td colspan="9">按脚本F8，选择“背钻测试条”，程序自动生成：bz_coupon、bz_test、<span class="red">nbz_coupon</span>，并在PNL的四角各加一对，若有空间，可在外沿4个<br>pnl板边的中间位置各多加1个。见最下图片：</td></tr>
        <tr style="height:37px"><th>68</th><td colspan="9">1）背钻孔孔径在0.4mm¬2.0mm范围内需添加（包含0.4mm和2.0mm）；</td></tr>
        <tr style="height:37px"><th>69</th><td colspan="9">2）测试coupon与板边图形间距≥5mm;</td></tr>
        <tr style="height:37px"><th>70</th><td colspan="9">3）测试coupon至少在每条板边添加一个，若板中间则板中间也需要添加一个；</td></tr>
        <tr style="height:37px"><th>71</th><td colspan="9">4）若板边已无空间添加测试coupon时，需向外扩出一定空间进行添加；</td></tr>
        <tr style="height:37px"><th>72</th><td colspan="9">5）测试coupon中的背钻通孔孔径统一按照背钻孔孔径-6mil设计；</td></tr>
        <tr style="height:94px"><th>73</th>
          <td class="c red" rowspan="7">背钻孔与补偿后外<br>层线路导体间距≥<br>4mil</td>
          <td class="c red" rowspan="4">背钻孔无<br>树脂塞孔</td>
          <td class="red">背钻对应一钻<br>孔径＞0.2mm</td>
          <td class="red" colspan="7">流程1：前工序→钻孔[钻孔]→沉铜[去毛刺→沉铜→(沉铜1)]→电镀[板镀→(板镀1)]→外层干膜[外层前处<br>理→贴膜→曝光→显影]→图形电镀[图形电镀]/(图镀铜镍金[图镀铜镍金])→钻孔[背钻]→外层蚀刻[退膜<br>→碱性蚀刻→退锡/(水洗烘干)]→沉铜[去毛刺1(关闭磨刷，只高压水洗)]→AOI[…]→后工序</td></tr>
        <tr style="height:94px"><th>74</th>
          <td class="red" rowspan="2">背钻对应一钻<br>孔径＞0.2mm<br>且层压外层铜<br>箔≤0.5OZ：</td>
          <td class="red" colspan="7">负片（只针对P2厂）：（背钻刀径需大于孔环单边4mil以上）：<br>前工序→钻孔[钻孔]→沉铜[去毛刺→沉铜→(沉铜1)]→电镀[负片电镀→磨板]→外层干膜[外层前处理→贴<br>膜→曝光→显影→酸性蚀刻→退膜]→钻孔[背钻]→沉铜[去毛刺1(关闭磨刷，只高压水洗)]→AOI[…]→后<br>工序</td></tr>
        <tr style="height:94px"><th>75</th>
          <td class="red" colspan="7">正片：<br>前工序→钻孔[钻孔]→沉铜[去毛刺→沉铜→(沉铜1)]→电镀[板镀→(板镀1)]→外层干膜[外层前处理→贴<br>膜→曝光→显影]→图形电镀[图形电镀]/(图镀铜镍金[图镀铜镍金])→钻孔[背钻]→外层蚀刻[退膜→碱性<br>蚀刻→退锡/(水洗烘干)]→沉铜[去毛刺1(关闭磨刷，只高压水洗)]→AOI[…]→后工序</td></tr>
        <tr style="height:90px"><th>76</th>
          <td class="red">背钻对应一钻<br>孔径<span class="arial">≤0.2mm</span></td>
          <td class="red" colspan="7">流程2：前工序→钻孔[钻孔]→沉铜[去毛刺→沉铜→(沉铜1)]→电镀[板镀→(板镀1)]→图形电镀[镀锡]→<br>钻孔[背钻]→外层蚀刻[碱性蚀刻→退锡]→沉铜[去毛刺1(关闭磨刷，只高压水洗)]→外层干膜[外层前处理<br>→贴膜→曝光→显影]→图形电镀[图形电镀]/(图镀铜镍金[图镀铜镍金])→外层蚀刻[退膜→碱性蚀刻→退<br>锡/(水洗烘干)]→AOI[…]→后工序</td></tr>
        <tr style="height:105px"><th class="on">77</th>
          <td class="c red" rowspan="3">背钻孔树<br>脂塞孔</td>
          <td class="red" rowspan="2">负片流程</td>
          <td class="red sel" colspan="7">负片流程（一钻孔＞0.2mm）<br>前工序→沉铜[去毛刺→沉铜→(沉铜1)]→电镀[负片电镀→磨板]→钻孔[背钻]→沉铜[去毛刺1(关闭磨刷，<br>只高压水洗)]→树脂塞孔[阻焊前处理→烘板→树脂塞孔→终固化]→陶瓷磨板[陶瓷磨板]→(减薄铜[减薄<br>铜]→陶瓷磨板[抛光]，根据需要添加)→层压[X-Ray冲孔]→钻孔[钻孔]→后工序</td></tr>
        <tr style="height:113px"><th></th>
          <td class="red" colspan="7">负片流程（一钻孔≤0.2mm）<br>前工序→沉铜[去毛刺→沉铜→(沉铜1)]→电镀[负片电镀]→图形电镀[镀锡]→钻孔[背钻]→外层蚀刻[外层<br>蚀刻1→退锡]→沉铜[去毛刺1(关闭磨刷，只高压水洗)]→树脂塞孔[阻焊前处理→烘板→树脂塞孔→终固<br>化]→陶瓷磨板[陶瓷磨板]→(减薄铜[减薄铜]→陶瓷磨板[抛光]，根据需要添加)→层压[X-Ray冲孔]→钻孔<br>[钻孔]→后工序</td></tr>
        <tr style="height:146px"><th></th><td></td><td colspan="7"></td></tr>
      </tbody>
    </table>
    <svg class="mark" width="510" height="190" fill="#0f0" stroke="#0f0" stroke-linejoin="round" stroke-linecap="round"><path d="M500 6L28 173" stroke-width="5"/><path d="M6 181L26 168 31 181z" stroke-width="4"/></svg>
  </div>
  <div class="bar">
    <i class="split"></i>
    <button aria-label="向上"><i class="dn up"></i></button>
    <div class="track"><div class="thumb"></div></div>
    <button aria-label="向下"><i class="dn"></i></button>
  </div>
`, function (dom) {
  const head = dom.querySelector("thead tr");
  for (const name of "CDEFGHIJKLMNOPQRSTUVW") {
    const th = document.createElement("th");
    th.textContent = name;
    if (name >= "F" && name <= "L") th.className = "on";
    head.appendChild(th);
  }
  // half-width runs get the monospaced face
  const walker = document.createTreeWalker(dom.querySelector("tbody"), NodeFilter.SHOW_TEXT);
  const nodes = [];
  while (walker.nextNode()) nodes.push(walker.currentNode);
  nodes.filter(n => n.parentNode.closest("td") && !n.parentNode.closest(".arial") && n.data.trim()).forEach(n => {
    const parts = n.data.split(/([\x21-\x7e¬]+)/);
    n.replaceWith(...parts.filter(Boolean).map(part => {
      if (!/^[\x21-\x7e¬]/.test(part)) return part;
      const span = document.createElement("span");
      span.className = "half";
      span.textContent = part;
      return span;
    }));
  });
});

define("sheet-bar", `
  :host { display: flex; height: 17px; background: linear-gradient(#8fabd6, #a6bfe2); border-top: 1px solid #a9cbe8; border-bottom: 1px solid #56739f; box-sizing: border-box; }
  .nav { display: flex; width: 62px; background: #d7e4f5; }
  .nav button { flex: 1; color: #26477e; }
  .tab { width: 46px; background: #fff; clip-path: polygon(0 0, 100% 0, 88% 100%, 4% 100%); font-size: 13px; line-height: 15px; }
  .new { width: 42px; background: #cfdff4; clip-path: polygon(22% 0, 100% 0, 78% 100%, 0 100%); }
  .gap { flex: 994; }
  .split { width: 6px; background: #f2f6fb; border: 1px solid #6987b5; }
  .scroll { flex: 748; display: flex; background: #7796c3; }
  .scroll button { width: 18px; }
  .arrow { border: 4px solid transparent; border-right-color: #2e4a7c; border-left: 0; }
  .next { transform: rotate(180deg); }
  .track { flex: 1; display: flex; }
  .track::before { content: ""; flex: 50; }
  .track::after { content: ""; flex: 122; }
  .thumb { flex: 538; border: 1px solid #5d7087; border-radius: 2px; background: linear-gradient(#f0f3f7, #bcc8d6); display: flex; align-items: center; justify-content: center; }
  .thumb::after { content: ""; width: 8px; height: 7px; background: repeating-linear-gradient(90deg, #6d7f98 0 1px, transparent 1px 2px); }
  .end { width: 17px; background: #7b99c6; }
`, `
  <div class="nav">
    <button aria-label="第一张"><svg width="7" height="9"><path d="M0 0h2v9H0zM7 0v9L2 4z" fill="#15428b"/></svg></button>
    <button aria-label="上一张"><svg width="5" height="9"><path d="M5 0v9L0 4z" fill="#15428b"/></svg></button>
    <button aria-label="下一张"><svg width="5" height="9"><path d="M0 0v9l5-5z" fill="#15428b"/></svg></button>
    <button aria-label="最后一张"><svg width="7" height="9"><path d="M5 0h2v9H5zM0 0v9l5-5z" fill="#15428b"/></svg></button>
  </div>
  <button class="tab">背钻</button>
  <button class="new" aria-label="插入工作表"><app-icon name="newSheet"></app-icon></button>
  <div class="gap"></div><i class="split"></i>
  <div class="scroll">
    <button aria-label="向左"><i class="arrow"></i></button>
    <div class="track"><div class="thumb"></div></div>
    <button aria-label="向右"><i class="arrow next"></i></button>
  </div>
  <i class="split"></i><div class="end"></div>
`);

define("status-bar", `
  :host { display: flex; align-items: stretch; height: 22px; justify-content: space-between; background: linear-gradient(#e3eefb, #c3d8f5 35%, #b3cdf1 45%, #d3e5fb 80%, #cfe2fa); }
  .state { width: 41px; padding-left: 7px; line-height: 22px; border-right: 1px solid #9fbfe8; }
  .zoom { display: flex; align-items: center; padding: 0 5px; border-left: 1px solid #6a92c8; background: linear-gradient(#a9c6ee, #8db1e3 50%, #a6c4ec); }
  .views { display: flex; border: 1px solid #7b9cc9; margin-right: 8px; background: #cfdff3; }
  .views button { width: 18px; height: 18px; }
  .views .on { background: linear-gradient(#fbdc9c, #fdc860); }
  output { width: 41px; }
  .round { width: 16px; height: 16px; border: 1px solid #5778a8; border-radius: 50%; background: #e9f1fb; color: #3b5a8c; }
  input { appearance: none; width: 102px; height: 20px; background: linear-gradient(transparent 9px, #3f6399 9px 10px, #dbe8f8 10px 11px, transparent 11px); }
  input::-webkit-slider-thumb { appearance: none; width: 9px; height: 13px; background: linear-gradient(#fff, #b7cbe6); border: 1px solid #3f6399; border-radius: 1px 1px 5px 5px; }
`, `
  <div class="state">就绪</div>
  <div class="zoom">
    <div class="views"><button class="on" aria-label="普通"><app-icon name="normalView"></app-icon></button><button aria-label="页面布局"><app-icon name="pageView"></app-icon></button><button aria-label="分页预览"><app-icon name="breakView"></app-icon></button></div>
    <output>115%</output>
    <button class="round" aria-label="缩小"><svg width="8" height="8"><path d="M0 4h8" stroke="#3b5a8c" stroke-width="2"/></svg></button>
    <input type="range" min="0" max="100" value="51" aria-label="显示比例">
    <button class="round" aria-label="放大"><svg width="8" height="8"><path d="M0 4h8M4 0v8" stroke="#3b5a8c" stroke-width="2"/></svg></button>
  </div>
`);

define("task-bar", `
  :host { display: flex; height: 40px; align-items: center; color: #fff; border-top: 1px solid #0a1626;
    background: linear-gradient(rgba(120,150,185,.45), transparent 6px), linear-gradient(90deg, #02214a 0, #0d3668 10%, #0b2f5f 45%, #082a5b 64%, #173a66 68%, #0b2c58 74%, #082a5b 86%, #1f3c5c 90%, #142b44 96%, #0c2036 100%); }
  .start { width: 54px; }
  .apps { flex: 1; display: flex; gap: 4px; padding-left: 6px; }
  .app { width: 58px; height: 38px; border: 1px solid #93a9c2; border-radius: 3px; box-shadow: 0 0 0 1px #06142a; background: linear-gradient(135deg, rgba(255,255,255,.45), rgba(255,255,255,.12) 50%, rgba(90,130,180,.3)); }
  .stack { width: 53px; margin-right: 5px; box-shadow: 0 0 0 1px #06142a, 3px 0 0 #7d93ad, 4px 0 0 #06142a; }
  .active { background: linear-gradient(135deg, #eef2f5, #8d9db0 55%, #b4c0cd); }
  .tray { display: flex; align-items: center; gap: 11px; }
  .mini { display: flex; flex-direction: column; align-items: center; gap: 6px; }
  .mini .dn, .up { border-top-color: #fff; }
  .up { transform: rotate(180deg); }
  time { display: flex; flex-direction: column; align-items: center; width: 60px; line-height: 18px; margin-left: 4px; }
  .desk { width: 13px; height: 38px; margin: 0 1px 0 9px; border: 1px solid #5f748c; background: linear-gradient(135deg, #6b7d90, #16293f 50%); }
`, `
  <button class="start" aria-label="开始"><app-icon name="start"></app-icon></button>
  <div class="apps">
    <button class="app" aria-label="Shell"><app-icon name="shell"></app-icon></button>
    <button class="app" aria-label="记事本"><app-icon name="notepad"></app-icon></button>
    <button class="app" aria-label="Genesis"><app-icon name="g"></app-icon></button>
    <button class="app" aria-label="磁盘"><app-icon name="floppy"></app-icon></button>
    <button class="app stack active" aria-label="Excel"><app-icon name="excel"></app-icon></button>
    <button class="app stack" aria-label="Word"><app-icon name="word"></app-icon></button>
    <button class="app" aria-label="CAM"><app-icon name="disc"></app-icon></button>
    <button class="app stack" aria-label="X"><app-icon name="x"></app-icon></button>
    <button class="app" aria-label="P"><app-icon name="p"></app-icon></button>
    <button class="app" aria-label="CAM"><app-icon name="disc"></app-icon></button>
    <button class="app" aria-label="P"><app-icon name="p"></app-icon></button>
    <button class="app" aria-label="钉钉"><app-icon name="wing"></app-icon></button>
  </div>
  <div class="tray">
    <app-icon name="keyboard"></app-icon><app-icon name="help"></app-icon>
    <div class="mini"><app-icon name="mini"></app-icon><i class="dn"></i></div>
    <i class="dn up"></i>
    <app-icon name="flag"></app-icon><app-icon name="sound"></app-icon><app-icon name="net"></app-icon>
    <time><span>16:19</span><span>2023/6/3</span></time>
  </div>
  <button class="desk" aria-label="显示桌面"></button>
`);

define("excel-app", `
  :host { display: flex; flex-direction: column; height: 100vh; background: #bfdbff; }
  title-bar, ribbon-tabs, ribbon-bar, formula-bar, sheet-bar, status-bar, task-bar { flex: none; box-sizing: border-box; }
  ribbon-bar, formula-bar, task-bar { overflow: hidden; }
`, `
  <title-bar></title-bar>
  <ribbon-tabs></ribbon-tabs>
  <ribbon-bar></ribbon-bar>
  <formula-bar></formula-bar>
  <work-sheet></work-sheet>
  <sheet-bar></sheet-bar>
  <status-bar></status-bar>
  <task-bar></task-bar>
`);
</script>
</body>
</html>
